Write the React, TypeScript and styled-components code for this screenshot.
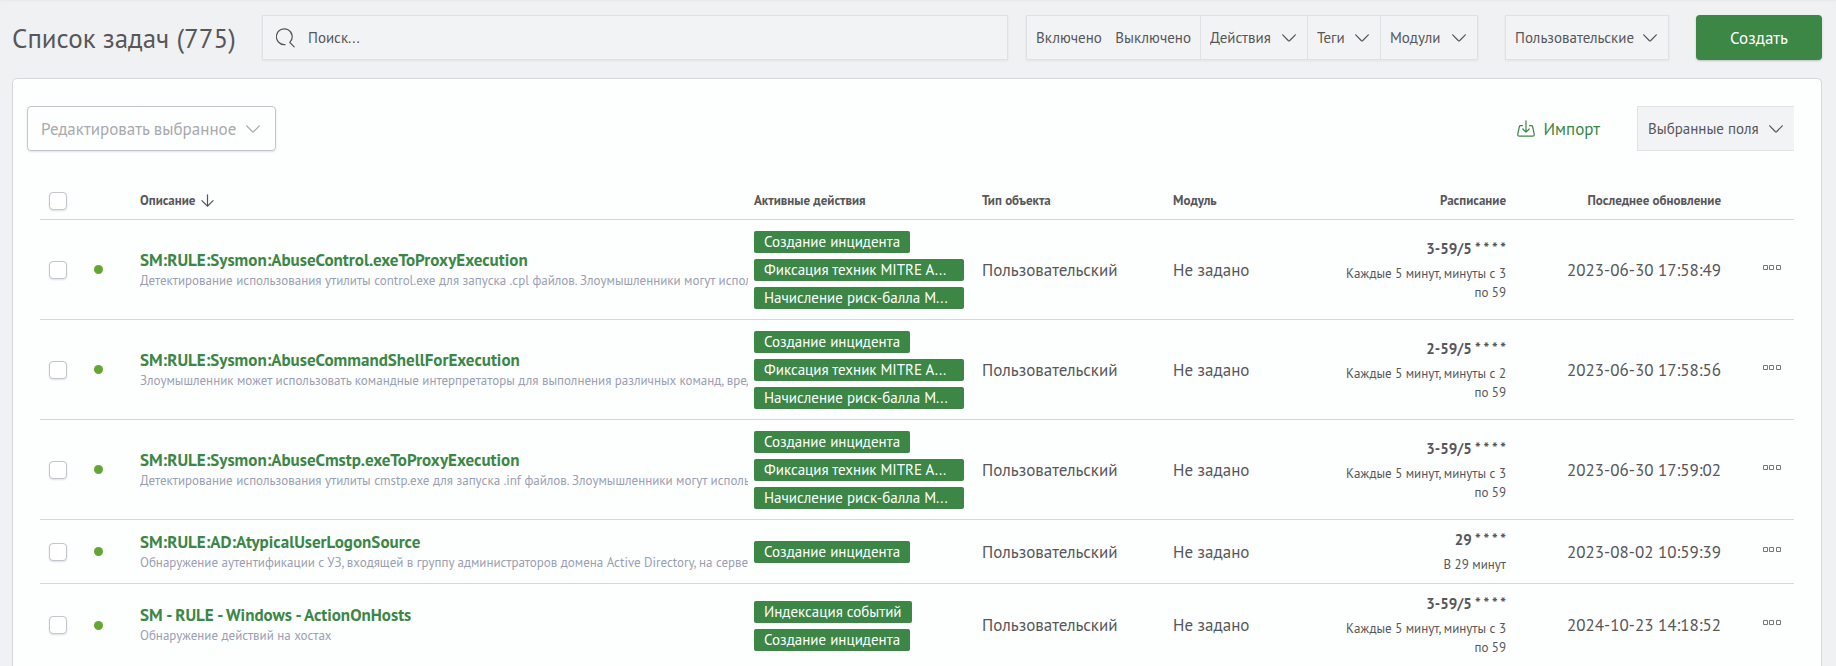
import React from "react";
import styled, { createGlobalStyle } from "styled-components";

const color = {
  page: "#f0f1f3",
  field: "#f2f3f5",
  fieldBorder: "#e0e1e4",
  panel: "#fdfefe",
  line: "#d5d7dc",
  control: "#c3c5cc",
  text: "#57575a",
  muted: "#9a9fb3",
  disabled: "#a9aaae",
  green: "#3c8646",
  dot: "#62a733",
};

const GlobalStyle = createGlobalStyle`
  * { box-sizing: border-box; }
  body {
    margin: 0;
    background: ${color.page};
    color: ${color.text};
    font-family: "PT Sans", Roboto, "Liberation Sans", sans-serif;
    font-size: 17px;
  }
  button, input, select { font: inherit; color: inherit; margin: 0; }
`;

const Page = styled.div`
  display: flex;
  flex-direction: column;
  min-height: 100vh;
  padding: 15px 14px 0 12px;
  box-shadow: inset 0 2px 2px -1px #e6e7ea;
`;

const TopBar = styled.header`
  display: flex;
  align-items: center;
  height: 45px;
  margin-bottom: 18px;
`;

const Title = styled.h1`
  flex: none;
  width: 250px;
  margin: 0;
  font-size: 27px;
  line-height: 32px;
  font-weight: 400;
  white-space: nowrap;
`;

const SearchBox = styled.label`
  display: flex;
  flex: 1;
  align-items: center;
  gap: 13px;
  min-width: 0;
  height: 45px;
  margin-right: 18px;
  padding: 0 13px;
  border: 1px solid ${color.fieldBorder};
  background: ${color.field};
  box-shadow: 0 1px 2px #e3e4e7;
`;

const SearchInput = styled.input`
  flex: 1;
  min-width: 0;
  padding: 0;
  border: 0;
  outline: 0;
  background: none;
  font-size: 15px;
  &::placeholder { color: ${color.text}; opacity: 1; }
`;

const FilterGroup = styled.div`
  display: flex;
  flex: none;
  height: 45px;
  margin-right: 27px;
  border: 1px solid ${color.fieldBorder};
  background: ${color.field};
  box-shadow: 0 1px 2px #e3e4e7;
  & > * + * { border-left: 1px solid ${color.fieldBorder}; }
`;

const StateToggle = styled.div`
  display: flex;
  align-items: center;
  justify-content: space-between;
  width: 173px;
  padding: 0 9px;
`;

const StateButton = styled.button`
  padding: 0;
  border: 0;
  background: none;
  font-size: 15px;
  cursor: pointer;
`;

const SelectWrap = styled.div<{ $width: number }>`
  position: relative;
  flex: none;
  width: ${(p) => p.$width}px;
  height: 100%;
  svg {
    position: absolute;
    top: 50%;
    right: 11px;
    margin-top: -4px;
    pointer-events: none;
  }
`;

const SelectField = styled.select`
  appearance: none;
  width: 100%;
  height: 100%;
  padding: 0 25px 0 9px;
  border: 0;
  border-radius: 0;
  background: none;
  font-size: 15px;
  cursor: pointer;
`;

const PrimaryButton = styled.button`
  flex: none;
  width: 126px;
  height: 45px;
  border: 0;
  border-radius: 4px;
  background: ${color.green};
  box-shadow: 0 1px 2px #b9c4bc;
  color: #fff;
  font-size: 17px;
  cursor: pointer;
`;

const Panel = styled.main`
  flex: 1;
  padding: 27px 27px 0 14px;
  border: 1px solid ${color.line};
  border-bottom: 0;
  border-radius: 5px 5px 0 0;
  background: ${color.panel};
`;

const Toolbar = styled.div`
  display: flex;
  align-items: center;
  justify-content: space-between;
  height: 45px;
`;

const ToolbarEnd = styled.div`
  display: flex;
  align-items: center;
  gap: 37px;
  height: 100%;
`;

const EditBox = styled.div`
  height: 100%;
  border: 1px solid ${color.control};
  border-radius: 4px;
  box-shadow: 0 1px 2px #dfe0e4;
  color: ${color.disabled};
  select { padding-left: 13px; font-size: 17px; opacity: 1; }
  svg { right: 15px; }
`;

const FieldsBox = styled.div`
  height: 100%;
  border: 1px solid ${color.fieldBorder};
  border-right: 0;
  background: ${color.field};
  select { padding-left: 10px; }
`;

const ImportButton = styled.button`
  display: flex;
  align-items: center;
  gap: 9px;
  padding: 0;
  border: 0;
  background: none;
  color: ${color.green};
  font-size: 17px;
  cursor: pointer;
`;

const TableArea = styled.div`
  padding: 31px 0 0 13px;
`;

const Table = styled.table`
  width: 100%;
  table-layout: fixed;
  border-collapse: separate;
  border-spacing: 0;
`;

const HeadCell = styled.th<{ $align?: string }>`
  height: 38px;
  padding: 0 18px 0 0;
  border-bottom: 1px solid ${color.line};
  font-size: 13px;
  line-height: 16px;
  text-align: ${(p) => p.$align ?? "left"};
  white-space: nowrap;
`;

const SortButton = styled.button`
  display: flex;
  align-items: center;
  gap: 6px;
  padding: 0;
  border: 0;
  background: none;
  font-weight: 700;
  cursor: pointer;
`;

const Row = styled.tr`
  &:not(:last-child) > td { border-bottom: 1px solid ${color.line}; }
`;

const Cell = styled.td<{ $align?: string }>`
  padding: 8px 18px 8px 0;
  font-size: 17px;
  line-height: 22px;
  text-align: ${(p) => p.$align ?? "left"};
  white-space: nowrap;
`;

const Check = styled.input`
  appearance: none;
  display: block;
  width: 18px;
  height: 18px;
  margin: 0 0 0 9px;
  border: 1px solid ${color.control};
  border-radius: 4px;
  background: #fff;
  box-shadow: 0 1px 2px #dfe0e4;
  &:checked { background: ${color.green}; }
`;

const StatusDot = styled.span`
  display: block;
  width: 9px;
  height: 9px;
  border-radius: 50%;
  background: ${color.dot};
`;

const TaskLink = styled.a`
  display: block;
  color: ${color.green};
  font-size: 17px;
  line-height: 22px;
  font-weight: 700;
  text-decoration: none;
`;

const TaskNote = styled.div`
  overflow: hidden;
  margin-right: -12px;
  color: ${color.muted};
  font-size: 13px;
  line-height: 20px;
`;

const TagList = styled.div`
  display: flex;
  flex-direction: column;
  align-items: flex-start;
  gap: 6px;
  padding: 3px 0 2px;
`;

const Tag = styled.span<{ $wide: boolean }>`
  width: ${(p) => (p.$wide ? "100%" : "auto")};
  padding: 0 10px;
  border-radius: 2px;
  background: ${color.green};
  color: #fff;
  font-size: 15px;
  line-height: 22px;
`;

const Schedule = styled.div`
  padding: 2px 0 1px;
  white-space: normal;
`;

const Cron = styled.div`
  margin-bottom: 5px;
  font-size: 15px;
  line-height: 20px;
  font-weight: 700;
`;

const CronNote = styled.div`
  font-size: 13px;
  line-height: 19px;
`;

const MenuButton = styled.button`
  display: block;
  margin: 0 0 6px 24px;
  padding: 0;
  border: 0;
  background: none;
  color: #77787d;
  line-height: 0;
  cursor: pointer;
`;

const Chevron = () => (
  <svg width="14" height="8" viewBox="0 0 14 8" fill="none" stroke="currentColor" strokeWidth="1.2" strokeLinecap="round" strokeLinejoin="round" aria-hidden="true">
    <path d="M0.7 0.8 6.2 6.5Q7 7.2 7.8 6.5L13.3 0.8" />
  </svg>
);

const SearchIcon = () => (
  <svg width="19" height="20" viewBox="0 0 19 20" fill="none" stroke="currentColor" strokeWidth="1.2" strokeLinecap="round" aria-hidden="true">
    <path d="M9 16.6A7.9 7.9 0 1 1 13.8 14.4L18.2 18.8" />
  </svg>
);

const SortIcon = () => (
  <svg width="13" height="13" viewBox="0 0 13 13" fill="none" stroke="currentColor" strokeWidth="1.2" strokeLinecap="round" aria-hidden="true">
    <path d="M6.5 0.8V12M0.9 6.6 6.5 12.2 12.1 6.6" />
  </svg>
);

const ImportIcon = () => (
  <svg width="18" height="17" viewBox="0 0 18 17" fill="none" stroke="currentColor" strokeWidth="1.2" strokeLinecap="round" strokeLinejoin="round" aria-hidden="true">
    <path d="M5.5 5.6H3.4Q2.6 5.6 2.4 6.5L0.8 14Q0.5 16.2 2.4 16.2H15.6Q17.5 16.2 17.2 14L15.6 6.5Q15.4 5.6 14.6 5.6H12.5M9 0.8V12M5.8 9 9 12.2 12.2 9" />
  </svg>
);

const MoreIcon = () => (
  <svg width="18" height="5" viewBox="0 0 18 5" fill="none" stroke="currentColor" strokeWidth="1" aria-hidden="true">
    <path d="M0.5 0.5h4v4h-4zM6.5 0.5h4v4h-4zM13.5 0.5h4v4h-4z" />
  </svg>
);

function Dropdown({ label, width, disabled }: { label: string; width: number; disabled?: boolean }) {
  return (
    <SelectWrap $width={width}>
      <SelectField aria-label={label} disabled={disabled}>
        <option>{label}</option>
      </SelectField>
      <Chevron />
    </SelectWrap>
  );
}

type Task = {
  name: string;
  note: string;
  tags: string[];
  cron: string;
  cronNote: string;
  updated: string;
};

const incident = "Создание инцидента";
const threeTags = [incident, "Фиксация техник MITRE A...", "Начисление риск-балла M..."];

const tasks: Task[] = [
  {
    name: "SM:RULE:Sysmon:AbuseControl.exeToProxyExecution",
    note: "Детектирование использования утилиты control.exe для запуска .cpl файлов. Злоумышленники могут использовать",
    tags: threeTags,
    cron: "3-59/5 * * * *",
    cronNote: "Каждые 5 минут, минуты с 3 по 59",
    updated: "2023-06-30 17:58:49",
  },
  {
    name: "SM:RULE:Sysmon:AbuseCommandShellForExecution",
    note: "Злоумышленник может использовать командные интерпретаторы для выполнения различных команд, вредоносных",
    tags: threeTags,
    cron: "2-59/5 * * * *",
    cronNote: "Каждые 5 минут, минуты с 2 по 59",
    updated: "2023-06-30 17:58:56",
  },
  {
    name: "SM:RULE:Sysmon:AbuseCmstp.exeToProxyExecution",
    note: "Детектирование использования утилиты cmstp.exe для запуска .inf файлов. Злоумышленники могут использовать",
    tags: threeTags,
    cron: "3-59/5 * * * *",
    cronNote: "Каждые 5 минут, минуты с 3 по 59",
    updated: "2023-06-30 17:59:02",
  },
  {
    name: "SM:RULE:AD:AtypicalUserLogonSource",
    note: "Обнаружение аутентификации с УЗ, входящей в группу администраторов домена Active Directory, на серверах",
    tags: [incident],
    cron: "29 * * * *",
    cronNote: "В 29 минут",
    updated: "2023-08-02 10:59:39",
  },
  {
    name: "SM - RULE - Windows - ActionOnHosts",
    note: "Обнаружение действий на хостах",
    tags: ["Индексация событий", incident],
    cron: "3-59/5 * * * *",
    cronNote: "Каждые 5 минут, минуты с 3 по 59",
    updated: "2024-10-23 14:18:52",
  },
];

export default function App() {
  return (
    <>
      <GlobalStyle />
      <Page>
        <TopBar>
          <Title>Список задач (775)</Title>
          <SearchBox>
            <SearchIcon />
            <SearchInput type="text" placeholder="Поиск..." aria-label="Поиск" />
          </SearchBox>
          <FilterGroup>
            <StateToggle>
              <StateButton>Включено</StateButton>
              <StateButton>Выключено</StateButton>
            </StateToggle>
            <Dropdown label="Действия" width={107} />
            <Dropdown label="Теги" width={73} />
            <Dropdown label="Модули" width={97} />
          </FilterGroup>
          <FilterGroup>
            <Dropdown label="Пользовательские" width={162} />
          </FilterGroup>
          <PrimaryButton>Создать</PrimaryButton>
        </TopBar>
        <Panel>
          <Toolbar>
            <EditBox>
              <Dropdown label="Редактировать выбранное" width={247} disabled />
            </EditBox>
            <ToolbarEnd>
              <ImportButton>
                <ImportIcon />
                Импорт
              </ImportButton>
              <FieldsBox>
                <Dropdown label="Выбранные поля" width={156} />
              </FieldsBox>
            </ToolbarEnd>
          </Toolbar>
          <TableArea>
            <Table>
              <colgroup>
                <col width="54" />
                <col width="46" />
                <col />
                <col width="228" />
                <col width="191" />
                <col width="160" />
                <col width="191" />
                <col width="215" />
                <col width="55" />
              </colgroup>
              <thead>
                <tr>
                  <HeadCell>
                    <Check type="checkbox" aria-label="Выбрать все" />
                  </HeadCell>
                  <HeadCell />
                  <HeadCell>
                    <SortButton>
                      Описание
                      <SortIcon />
                    </SortButton>
                  </HeadCell>
                  <HeadCell>Активные действия</HeadCell>
                  <HeadCell>Тип объекта</HeadCell>
                  <HeadCell>Модуль</HeadCell>
                  <HeadCell $align="right">Расписание</HeadCell>
                  <HeadCell $align="right">Последнее обновление</HeadCell>
                  <HeadCell />
                </tr>
              </thead>
              <tbody>
                {tasks.map((task) => (
                  <Row key={task.name}>
                    <Cell>
                      <Check type="checkbox" aria-label={task.name} />
                    </Cell>
                    <Cell>
                      <StatusDot />
                    </Cell>
                    <Cell>
                      <TaskLink href="#">{task.name}</TaskLink>
                      <TaskNote>{task.note}</TaskNote>
                    </Cell>
                    <Cell>
                      <TagList>
                        {task.tags.map((tag) => (
                          <Tag key={tag} $wide={tag.endsWith("...")}>
                            {tag}
                          </Tag>
                        ))}
                      </TagList>
                    </Cell>
                    <Cell>Пользовательский</Cell>
                    <Cell>Не задано</Cell>
                    <Cell $align="right">
                      <Schedule>
                        <Cron>{task.cron}</Cron>
                        <CronNote>{task.cronNote}</CronNote>
                      </Schedule>
                    </Cell>
                    <Cell $align="right">{task.updated}</Cell>
                    <Cell>
                      <MenuButton aria-label="Меню задачи">
                        <MoreIcon />
                      </MenuButton>
                    </Cell>
                  </Row>
                ))}
              </tbody>
            </Table>
          </TableArea>
        </Panel>
      </Page>
    </>
  );
}
